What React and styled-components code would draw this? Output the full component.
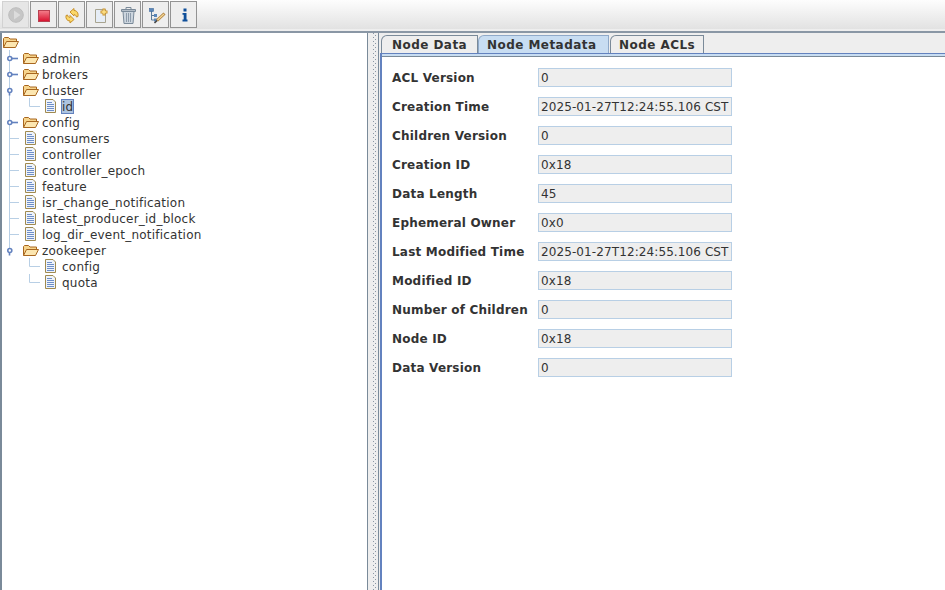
import React from 'react';
import styled, { createGlobalStyle } from 'styled-components';

const GlobalStyle = createGlobalStyle`
  html, body { margin: 0; padding: 0; background: #fff; }
  body { font-family: "DejaVu Sans", sans-serif; font-size: 12px; color: #333; }
`;

const Frame = styled.div`
  width: 945px;
  height: 590px;
  display: flex;
  flex-direction: column;
  overflow: hidden;
  background: #eee;
`;

const Toolbar = styled.div`
  height: 29px;
  flex: none;
  display: flex;
  gap: 1px;
  padding: 1px 0 0 2px;
  box-sizing: border-box;
  background: linear-gradient(#fdfdfd, #e2e2e2);
`;

const ToolButton = styled.button`
  width: 27px;
  height: 27px;
  padding: 0;
  display: flex;
  align-items: center;
  justify-content: center;
  background: ${({ $disabled }) => ($disabled ? '#e6e6e6' : '#eee')};
  border: 1px solid ${({ $disabled }) => ($disabled ? '#d2d2d2' : '#939393')};
`;

const Split = styled.div`
  flex: 1;
  display: flex;
  min-height: 0;
  margin-top: 2px;
  border-top: 2px solid #8a97a5;
`;

const TreePane = styled.div`
  width: 368px;
  box-sizing: border-box;
  flex: none;
  padding-top: 1px;
  background: #fff;
  border-left: 2px solid #7a8a99;
  border-right: 1px solid #7a8a99;
`;

const Divider = styled.div`
  width: 10px;
  flex: none;
  background-color: #eee;
  background-image:
    linear-gradient(#8a97a5 1px, transparent 1px),
    linear-gradient(#8a97a5 1px, transparent 1px);
  background-size: 1px 4px;
  background-position: 5px 0, 7px 2px;
  background-repeat: repeat-y;
`;

const TreeRow = styled.div`
  height: 16px;
  display: flex;
  align-items: center;
`;

const Guide = styled.svg`
  flex: none;
  display: block;
`;

const TreeLabel = styled.span`
  margin-left: 2px;
  padding: 0 1px;
  height: 15px;
  line-height: 17px;
  letter-spacing: 0.22px;
  white-space: nowrap;
  color: #333;
  background: ${({ $selected }) => ($selected ? '#adc4e0' : 'transparent')};
  outline: ${({ $selected }) => ($selected ? '1px solid #6382bf' : 'none')};
  outline-offset: -1px;
`;

const DetailPane = styled.div`
  flex: 1;
  min-width: 0;
  display: flex;
  flex-direction: column;
  border-left: 1px solid #7a8a99;
`;

const TabStrip = styled.div`
  height: 20px;
  flex: none;
  display: flex;
  align-items: flex-end;
  padding-left: 2px;
`;

const Tab = styled.div`
  height: 18px;
  box-sizing: border-box;
  margin-right: ${({ $gap }) => $gap}px;
  width: ${({ $w }) => $w}px;
  padding-left: ${({ $pad }) => $pad}px;
  font-weight: bold;
  line-height: 18px;
  letter-spacing: 0.45px;
  white-space: nowrap;
  color: #333;
  background: ${({ $active }) => ($active ? '#c8ddf2' : '#eee')};
  border: 1px solid ${({ $active }) => ($active ? '#8fa9c9' : '#7a8a99')};
  border-bottom: none;
  border-top-left-radius: 6px;
`;

const TabContent = styled.div`
  flex: 1;
  margin-left: 1px;
  display: flex;
  flex-direction: column;
  border-left: 2px solid #6382bf;
`;

const TabBand = styled.div`
  height: 4px;
  flex: none;
  background: #c8ddf2;
  border-top: 1px solid #6382bf;
  border-bottom: 1px solid #7a8a99;
  box-sizing: border-box;
`;

const TabBody = styled.div`
  flex: 1;
  background: #fff;
  padding: 11px 0 0 10px;
  display: flex;
  flex-direction: column;
  gap: 10px;
`;

const FieldRow = styled.div`
  display: flex;
  align-items: center;
  height: 19px;
`;

const FieldLabel = styled.label`
  width: 146px;
  flex: none;
  font-weight: bold;
  letter-spacing: 0.2px;
  color: #333;
`;

const FieldValue = styled.div`
  width: 194px;
  height: 19px;
  box-sizing: border-box;
  padding: 0 2px;
  line-height: 18px;
  letter-spacing: 0.1px;
  overflow: hidden;
  white-space: nowrap;
  background: #eee;
  border: 1px solid #b8cfe5;
  color: #333;
`;

const FolderIcon = () => (
  <svg width="16" height="13" viewBox="0 0 16 13">
    <path d="M.5 11.5V2.5L1.5 1.5H5.5L7 3H13.5V5" fill="#f6d48c" stroke="#a8661f" />
    <path d="M.5 11.5L3.5 5.5H15.5L12.5 11.5Z" fill="#fce6b0" stroke="#a8661f" />
  </svg>
);

const FileIcon = () => (
  <svg width="16" height="14" viewBox="0 0 16 14">
    <path d="M2.5 .5H10L12.5 3V13.5H2.5Z" fill="#eef3fa" stroke="#a08a50" />
    <path d="M4 3.5H9M4 5.5H11M4 7.5H11M4 9.5H11M4 11.5H11" stroke="#6f8fc8" />
  </svg>
);

const TreeNode = ({ name, depth = 0, kind = 'file', handle, last, outer = true, selected }) => {
  const w = depth === 0 ? 21 : 41;
  return (
    <TreeRow>
      <Guide width={w} height="16" viewBox={`0 0 ${w} 16`}>
        {outer && <path d={`M7.5 0V${last ? 8 : 16}`} stroke="#b8cfe5" fill="none" />}
        {depth === 1 && <path d="M27.5 0V8.5H38" stroke="#b8cfe5" fill="none" />}
        {depth === 0 && !handle && <path d="M8 8.5H17" stroke="#b8cfe5" fill="none" />}
        {handle === 'closed' && <path d="M10 8.5H16" stroke="#6382bf" strokeWidth="1.6" fill="none" />}
        {handle === 'open' && <path d="M7.5 10V13.5" stroke="#6382bf" strokeWidth="1.6" fill="none" />}
        {handle && <circle cx="7.8" cy="8.5" r="2" stroke="#6382bf" strokeWidth="1.6" fill="#fff" />}
      </Guide>
      {kind === 'folder' ? <FolderIcon /> : <FileIcon />}
      <TreeLabel $selected={selected}>{name}</TreeLabel>
    </TreeRow>
  );
};

const nodes = [
  { name: 'admin', kind: 'folder', handle: 'closed' },
  { name: 'brokers', kind: 'folder', handle: 'closed' },
  { name: 'cluster', kind: 'folder', handle: 'open' },
  { name: 'id', depth: 1, selected: true },
  { name: 'config', kind: 'folder', handle: 'closed' },
  { name: 'consumers' },
  { name: 'controller' },
  { name: 'controller_epoch' },
  { name: 'feature' },
  { name: 'isr_change_notification' },
  { name: 'latest_producer_id_block' },
  { name: 'log_dir_event_notification' },
  { name: 'zookeeper', kind: 'folder', handle: 'open', last: true },
  { name: 'config', depth: 1, outer: false },
  { name: 'quota', depth: 1, outer: false },
];

const fields = [
  ['ACL Version', '0'],
  ['Creation Time', '2025-01-27T12:24:55.106 CST'],
  ['Children Version', '0'],
  ['Creation ID', '0x18'],
  ['Data Length', '45'],
  ['Ephemeral Owner', '0x0'],
  ['Last Modified Time', '2025-01-27T12:24:55.106 CST'],
  ['Modified ID', '0x18'],
  ['Number of Children', '0'],
  ['Node ID', '0x18'],
  ['Data Version', '0'],
];

const App = () => (
  <Frame>
    <GlobalStyle />
    <Toolbar>
      <ToolButton $disabled>
        <svg width="20" height="20" viewBox="0 0 20 20">
          <circle cx="10" cy="10" r="7.3" fill="#c6c6c6" stroke="#bdbdbd" />
          <path d="M8 5.5L14.5 10L8 14.5Z" fill="#dcdcdc" />
        </svg>
      </ToolButton>
      <ToolButton>
        <svg width="16" height="16" viewBox="0 0 16 16">
          <defs>
            <linearGradient id="stopFill" x1="0" y1="0" x2="0" y2="1">
              <stop offset="0" stopColor="#f4808c" />
              <stop offset="1" stopColor="#d80f2c" />
            </linearGradient>
          </defs>
          <rect x="2.5" y="3.5" width="11" height="11" fill="url(#stopFill)" stroke="#b84050" />
        </svg>
      </ToolButton>
      <ToolButton>
        <svg width="20" height="20" viewBox="0 0 20 20">
          <path d="M8 7L12 3.5V5.5C15 5.5 16.5 8 16 11.5L14.5 12C14 10 13 9.5 12 9.5V11Z" fill="#fbd868" stroke="#c8902a" />
          <path d="M12 14.5L8 18V16C5 16 3.5 13.5 4 10.5L5.5 10C6 12 7 12.5 8 12.5V10.5Z" fill="#fbd868" stroke="#c8902a" />
        </svg>
      </ToolButton>
      <ToolButton>
        <svg width="20" height="20" viewBox="0 0 20 20">
          <path d="M5.5 4.5H15.5V17.5H5.5Z" fill="#e6edf6" stroke="#a8a490" />
          <path d="M14 3.5V10.5M10.5 7H17.5" stroke="#c8902a" strokeWidth="3" />
          <path d="M14 4.5V9.5M11.5 7H16.5" stroke="#ffe48a" strokeWidth="1.4" />
        </svg>
      </ToolButton>
      <ToolButton>
        <svg width="20" height="20" viewBox="0 0 20 20">
          <path d="M8 4V2.5H13V4" fill="none" stroke="#7a8a99" />
          <path d="M3.5 4.5H17.5V6.5H3.5Z" fill="#b4bec8" stroke="#7a8a99" />
          <path d="M5 6.5L6 18.5H15L16 6.5Z" fill="#ccd5de" stroke="#7a8a99" />
          <path d="M8.5 8V17M10.5 8V17M12.5 8V17" stroke="#8e9cab" />
        </svg>
      </ToolButton>
      <ToolButton>
        <svg width="20" height="20" viewBox="0 0 20 20">
          <path d="M5.5 6V15H8M5.5 10.5H8" fill="none" stroke="#5a7a9a" />
          <rect x="3.5" y="3.5" width="4" height="3" fill="#5a86b8" stroke="#3f6a9c" strokeWidth=".6" />
          <rect x="8" y="9" width="3" height="3" fill="#5a86b8" />
          <rect x="8" y="13.5" width="3" height="3" fill="#5a86b8" />
          <path d="M11 15.5L18.5 8.5" stroke="#b0803c" strokeWidth="3" />
          <path d="M11.5 15L18 9" stroke="#f4d898" strokeWidth="1.2" />
          <path d="M8.5 18L11 15.5" stroke="#444" strokeWidth="1.6" />
        </svg>
      </ToolButton>
      <ToolButton>
        <svg width="20" height="20" viewBox="0 0 20 20">
          <path d="M9.5 3.5H12.5V6.5H9.5ZM8.5 8H12.5V14.5H13.5V16.5H8.5V14.5H9.7V9.7H8.5Z" fill="#0f4f9a" />
        </svg>
      </ToolButton>
    </Toolbar>
    <Split>
      <TreePane>
        <TreeRow>
          <Guide width="1" height="16" />
          <FolderIcon />
        </TreeRow>
        {nodes.map((n) => (
          <TreeNode key={n.name + (n.depth || 0)} {...n} />
        ))}
      </TreePane>
      <Divider />
      <DetailPane>
        <TabStrip>
          <Tab $w={97} $pad={10} $gap={0}>Node Data</Tab>
          <Tab $active $w={131} $pad={8} $gap={1}>Node Metadata</Tab>
          <Tab $w={94} $pad={8} $gap={0}>Node ACLs</Tab>
        </TabStrip>
        <TabContent>
          <TabBand />
          <TabBody>
            {fields.map(([label, value]) => (
              <FieldRow key={label}>
                <FieldLabel>{label}</FieldLabel>
                <FieldValue>{value}</FieldValue>
              </FieldRow>
            ))}
          </TabBody>
        </TabContent>
      </DetailPane>
    </Split>
  </Frame>
);

export default App;
